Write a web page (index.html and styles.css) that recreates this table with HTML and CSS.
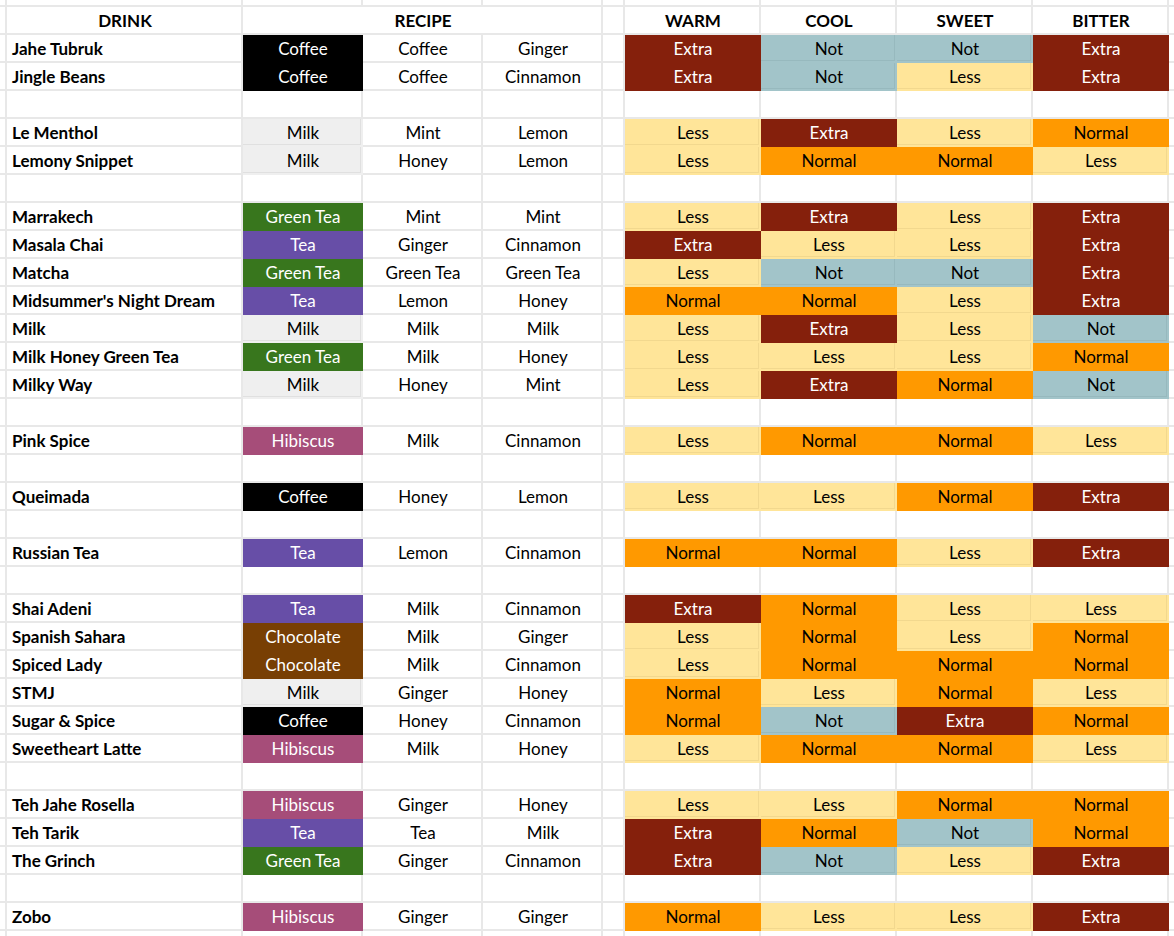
FILE: index.html
```html
<!DOCTYPE html>
<html>
<head>
<meta charset="utf-8">
<link rel="stylesheet" href="styles.css">
</head>
<body>
<table class="sheet">
<colgroup><col class="w-rh"><col class="w-name"><col class="w-ing"><col class="w-ing"><col class="w-ing"><col class="w-gap"><col class="w-lv"><col class="w-lv"><col class="w-lv"><col class="w-lv"><col class="w-end"></colgroup>
<tr class="r-top"><td></td><td></td><td></td><td></td><td></td><td></td><td></td><td></td><td></td><td></td><td></td></tr>
<tr><td></td><th>DRINK</th><th colspan="3">RECIPE</th><td></td><th>WARM</th><th>COOL</th><th>SWEET</th><th>BITTER</th><td></td></tr>
<tr><td></td><td class="name">Jahe Tubruk</td><td class="coffee">Coffee</td><td>Coffee</td><td>Ginger</td><td></td><td class="extra">Extra</td><td class="not">Not</td><td class="not">Not</td><td class="extra">Extra</td><td></td></tr>
<tr><td></td><td class="name">Jingle Beans</td><td class="coffee">Coffee</td><td>Coffee</td><td>Cinnamon</td><td></td><td class="extra">Extra</td><td class="not">Not</td><td class="less">Less</td><td class="extra">Extra</td><td></td></tr>
<tr><td></td><td></td><td></td><td></td><td></td><td></td><td></td><td></td><td></td><td></td><td></td></tr>
<tr><td></td><td class="name">Le Menthol</td><td class="milk">Milk</td><td>Mint</td><td>Lemon</td><td></td><td class="less">Less</td><td class="extra">Extra</td><td class="less">Less</td><td class="normal">Normal</td><td></td></tr>
<tr><td></td><td class="name">Lemony Snippet</td><td class="milk">Milk</td><td>Honey</td><td>Lemon</td><td></td><td class="less">Less</td><td class="normal">Normal</td><td class="normal">Normal</td><td class="less">Less</td><td></td></tr>
<tr><td></td><td></td><td></td><td></td><td></td><td></td><td></td><td></td><td></td><td></td><td></td></tr>
<tr><td></td><td class="name">Marrakech</td><td class="greentea">Green Tea</td><td>Mint</td><td>Mint</td><td></td><td class="less">Less</td><td class="extra">Extra</td><td class="less">Less</td><td class="extra">Extra</td><td></td></tr>
<tr><td></td><td class="name">Masala Chai</td><td class="tea">Tea</td><td>Ginger</td><td>Cinnamon</td><td></td><td class="extra">Extra</td><td class="less">Less</td><td class="less">Less</td><td class="extra">Extra</td><td></td></tr>
<tr><td></td><td class="name">Matcha</td><td class="greentea">Green Tea</td><td>Green Tea</td><td>Green Tea</td><td></td><td class="less">Less</td><td class="not">Not</td><td class="not">Not</td><td class="extra">Extra</td><td></td></tr>
<tr><td></td><td class="name">Midsummer's Night Dream</td><td class="tea">Tea</td><td>Lemon</td><td>Honey</td><td></td><td class="normal">Normal</td><td class="normal">Normal</td><td class="less">Less</td><td class="extra">Extra</td><td></td></tr>
<tr><td></td><td class="name">Milk</td><td class="milk">Milk</td><td>Milk</td><td>Milk</td><td></td><td class="less">Less</td><td class="extra">Extra</td><td class="less">Less</td><td class="not">Not</td><td></td></tr>
<tr><td></td><td class="name">Milk Honey Green Tea</td><td class="greentea">Green Tea</td><td>Milk</td><td>Honey</td><td></td><td class="less">Less</td><td class="less">Less</td><td class="less">Less</td><td class="normal">Normal</td><td></td></tr>
<tr><td></td><td class="name">Milky Way</td><td class="milk">Milk</td><td>Honey</td><td>Mint</td><td></td><td class="less">Less</td><td class="extra">Extra</td><td class="normal">Normal</td><td class="not">Not</td><td></td></tr>
<tr><td></td><td></td><td></td><td></td><td></td><td></td><td></td><td></td><td></td><td></td><td></td></tr>
<tr><td></td><td class="name">Pink Spice</td><td class="hibiscus">Hibiscus</td><td>Milk</td><td>Cinnamon</td><td></td><td class="less">Less</td><td class="normal">Normal</td><td class="normal">Normal</td><td class="less">Less</td><td></td></tr>
<tr><td></td><td></td><td></td><td></td><td></td><td></td><td></td><td></td><td></td><td></td><td></td></tr>
<tr><td></td><td class="name">Queimada</td><td class="coffee">Coffee</td><td>Honey</td><td>Lemon</td><td></td><td class="less">Less</td><td class="less">Less</td><td class="normal">Normal</td><td class="extra">Extra</td><td></td></tr>
<tr><td></td><td></td><td></td><td></td><td></td><td></td><td></td><td></td><td></td><td></td><td></td></tr>
<tr><td></td><td class="name">Russian Tea</td><td class="tea">Tea</td><td>Lemon</td><td>Cinnamon</td><td></td><td class="normal">Normal</td><td class="normal">Normal</td><td class="less">Less</td><td class="extra">Extra</td><td></td></tr>
<tr><td></td><td></td><td></td><td></td><td></td><td></td><td></td><td></td><td></td><td></td><td></td></tr>
<tr><td></td><td class="name">Shai Adeni</td><td class="tea">Tea</td><td>Milk</td><td>Cinnamon</td><td></td><td class="extra">Extra</td><td class="normal">Normal</td><td class="less">Less</td><td class="less">Less</td><td></td></tr>
<tr><td></td><td class="name">Spanish Sahara</td><td class="chocolate">Chocolate</td><td>Milk</td><td>Ginger</td><td></td><td class="less">Less</td><td class="normal">Normal</td><td class="less">Less</td><td class="normal">Normal</td><td></td></tr>
<tr><td></td><td class="name">Spiced Lady</td><td class="chocolate">Chocolate</td><td>Milk</td><td>Cinnamon</td><td></td><td class="less">Less</td><td class="normal">Normal</td><td class="normal">Normal</td><td class="normal">Normal</td><td></td></tr>
<tr><td></td><td class="name">STMJ</td><td class="milk">Milk</td><td>Ginger</td><td>Honey</td><td></td><td class="normal">Normal</td><td class="less">Less</td><td class="normal">Normal</td><td class="less">Less</td><td></td></tr>
<tr><td></td><td class="name">Sugar &amp; Spice</td><td class="coffee">Coffee</td><td>Honey</td><td>Cinnamon</td><td></td><td class="normal">Normal</td><td class="not">Not</td><td class="extra">Extra</td><td class="normal">Normal</td><td></td></tr>
<tr><td></td><td class="name">Sweetheart Latte</td><td class="hibiscus">Hibiscus</td><td>Milk</td><td>Honey</td><td></td><td class="less">Less</td><td class="normal">Normal</td><td class="normal">Normal</td><td class="less">Less</td><td></td></tr>
<tr><td></td><td></td><td></td><td></td><td></td><td></td><td></td><td></td><td></td><td></td><td></td></tr>
<tr><td></td><td class="name">Teh Jahe Rosella</td><td class="hibiscus">Hibiscus</td><td>Ginger</td><td>Honey</td><td></td><td class="less">Less</td><td class="less">Less</td><td class="normal">Normal</td><td class="normal">Normal</td><td></td></tr>
<tr><td></td><td class="name">Teh Tarik</td><td class="tea">Tea</td><td>Tea</td><td>Milk</td><td></td><td class="extra">Extra</td><td class="normal">Normal</td><td class="not">Not</td><td class="normal">Normal</td><td></td></tr>
<tr><td></td><td class="name">The Grinch</td><td class="greentea">Green Tea</td><td>Ginger</td><td>Cinnamon</td><td></td><td class="extra">Extra</td><td class="not">Not</td><td class="less">Less</td><td class="extra">Extra</td><td></td></tr>
<tr><td></td><td></td><td></td><td></td><td></td><td></td><td></td><td></td><td></td><td></td><td></td></tr>
<tr><td></td><td class="name">Zobo</td><td class="hibiscus">Hibiscus</td><td>Ginger</td><td>Ginger</td><td></td><td class="normal">Normal</td><td class="less">Less</td><td class="less">Less</td><td class="extra">Extra</td><td></td></tr>
<tr class="r-bot"><td></td><td></td><td></td><td></td><td></td><td></td><td></td><td></td><td></td><td></td><td></td></tr>
</table>
</body>
</html>
```

FILE: styles.css
```css
html, body {
  margin: 0;
  padding: 0;
  background: #ffffff;
  overflow: hidden;
}

.sheet {
  width: 1174px;
  table-layout: fixed;
  border-collapse: separate;
  border-spacing: 0;
  font-family: Lato, "Liberation Sans", sans-serif;
  font-size: 17px;
  color: #000000;
}

.w-rh { width: 7px; }
.w-name { width: 236px; }
.w-ing { width: 120px; }
.w-gap { width: 22px; }
.w-lv { width: 136px; }
.w-end { width: 5px; }

.sheet td,
.sheet th {
  padding: 1px 0 0 2px;
  height: 25px;
  border-right: 2px solid #e8e8e8;
  border-bottom: 2px solid #e8e8e8;
  text-align: center;
  vertical-align: middle;
  white-space: nowrap;
  overflow: hidden;
  font-weight: normal;
  line-height: 20px;
}

.sheet th {
  font-weight: bold;
}

.sheet td:last-child {
  border-right: 0;
}

.sheet .r-top td {
  padding: 0;
  height: 5px;
}

.sheet .r-bot td {
  padding: 0;
  height: 5px;
  border-bottom: 0;
}

.sheet td.name {
  text-align: left;
  padding-left: 5px;
  font-weight: bold;
}

/* base ingredient fills */
.sheet td.coffee { background: #000000; border-color: #000000; color: #ffffff; }
.sheet td.milk { background: #efefef; border-color: #efefef; box-shadow: inset -1px -1px 0 #e0e0e0; }
.sheet td.greentea { background: #38761d; border-color: #38761d; color: #ffffff; }
.sheet td.tea { background: #674ea7; border-color: #674ea7; color: #ffffff; }
.sheet td.hibiscus { background: #a64d79; border-color: #a64d79; color: #ffffff; }
.sheet td.chocolate { background: #783f04; border-color: #783f04; color: #ffffff; }

/* level fills */
.sheet td.extra { background: #85200c; border-color: #85200c; color: #ffffff; }
.sheet td.not { background: #a2c4c9; border-color: #a2c4c9; box-shadow: inset -1px -1px 0 #97b9be; }
.sheet td.less { background: #ffe599; border-color: #ffe599; box-shadow: inset -1px -1px 0 #f2d88e; }
.sheet td.normal { background: #ff9900; border-color: #ff9900; }
```
